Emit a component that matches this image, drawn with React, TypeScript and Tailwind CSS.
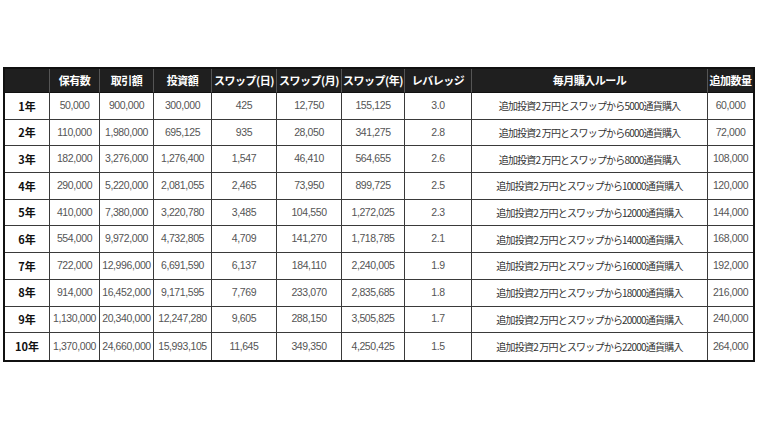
const headers = ['', '保有数', '取引額', '投資額', 'スワップ(日)', 'スワップ(月)', 'スワップ(年)', 'レバレッジ', '毎月購入ルール', '追加数量']

const rows = [
  ['1年', '50,000', '900,000', '300,000', '425', '12,750', '155,125', '3.0', '5000', '60,000'],
  ['2年', '110,000', '1,980,000', '695,125', '935', '28,050', '341,275', '2.8', '6000', '72,000'],
  ['3年', '182,000', '3,276,000', '1,276,400', '1,547', '46,410', '564,655', '2.6', '8000', '108,000'],
  ['4年', '290,000', '5,220,000', '2,081,055', '2,465', '73,950', '899,725', '2.5', '10000', '120,000'],
  ['5年', '410,000', '7,380,000', '3,220,780', '3,485', '104,550', '1,272,025', '2.3', '12000', '144,000'],
  ['6年', '554,000', '9,972,000', '4,732,805', '4,709', '141,270', '1,718,785', '2.1', '14000', '168,000'],
  ['7年', '722,000', '12,996,000', '6,691,590', '6,137', '184,110', '2,240,005', '1.9', '16000', '192,000'],
  ['8年', '914,000', '16,452,000', '9,171,595', '7,769', '233,070', '2,835,685', '1.8', '18000', '216,000'],
  ['9年', '1,130,000', '20,340,000', '12,247,280', '9,605', '288,150', '3,505,825', '1.7', '20000', '240,000'],
  ['10年', '1,370,000', '24,660,000', '15,993,105', '11,645', '349,350', '4,250,425', '1.5', '22000', '264,000'],
]

export default function App() {
  return (
    <div className="w-[760px] h-[428px] bg-white pt-[67px] pl-[3px]" style={{ fontFamily: '"Noto Sans CJK JP", "Noto Sans", sans-serif' }}>
      <div className="w-[752px] border-2 border-[#111] grid grid-cols-[45px_50px_54px_58px_65px_65px_63px_67px_236px_45px]">
        {/* header */}
        {headers.map((h, i) => (
          <div
            key={i}
            className={`h-[24px] bg-[#1f1f1f] flex items-center justify-center text-white font-bold text-[11px] tracking-[-0.5px] whitespace-nowrap border-b border-[#111] ${
              i < headers.length - 1 ? 'border-r border-r-[#555]' : ''
            }`}
          >
            {h}
          </div>
        ))}

        {rows.map((r, ri) =>
          r.map((c, ci) => (
            <div
              key={`${ri}-${ci}`}
              className={`h-[26.7px] flex items-center justify-center whitespace-nowrap border-[#3a3a3a] ${
                ci < r.length - 1 ? 'border-r' : ''
              } ${ri < rows.length - 1 ? 'border-b' : ''} ${
                ci === 0
                  ? 'font-bold text-[11px] text-[#111]'
                  : ci === 8
                    ? 'text-[10px] tracking-[-0.8px] text-[#333]'
                    : "font-['Liberation_Sans'] text-[10.5px] tracking-[-0.4px] text-[#555]"
              }`}
            >
              {ci === 8 ? `追加投資2 万円とスワップから${c}通貨購入` : c}
            </div>
          ))
        )}
      </div>
    </div>
  )
}
